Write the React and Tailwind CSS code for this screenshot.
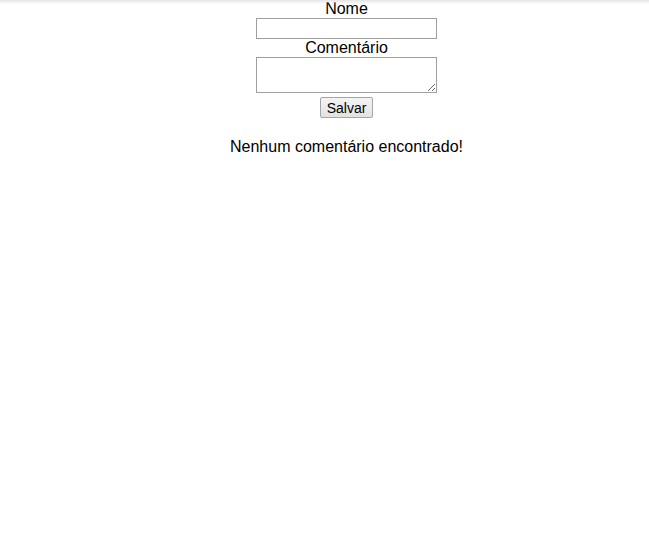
export default function App() {
  return (
    <div className="relative min-h-[534px] bg-white pl-[44px] text-black font-['Liberation_Sans',Arial,sans-serif] text-[16px]">
      <div className="pointer-events-none absolute inset-x-0 top-0 h-[4px] bg-gradient-to-b from-[#e4e4e4] to-white/0" />
      <form className="flex flex-col items-center" onSubmit={(e) => e.preventDefault()}>
        <label htmlFor="nome" className="leading-[18px]">Nome</label>
        <input
          id="nome"
          type="text"
          className="w-[181px] h-[21px] border border-[#a0a0a0] bg-white px-1 text-[13px] outline-none"
        />
        <label htmlFor="comentario" className="leading-[18px]">Comentário</label>
        <textarea
          id="comentario"
          className="w-[181px] h-[36px] border border-[#a0a0a0] bg-white px-1 text-[13px] outline-none"
        />
        <button
          type="submit"
          className="mt-[4px] h-[21px] px-[6px] text-[14px] leading-none border border-[#a6a6a6] rounded-[2px] bg-gradient-to-b from-[#f4f4f4] to-[#e2e2e2]"
        >
          Salvar
        </button>
      </form>
      <p className="mt-[19px] text-center leading-[20px]">Nenhum comentário encontrado!</p>
    </div>
  );
}
